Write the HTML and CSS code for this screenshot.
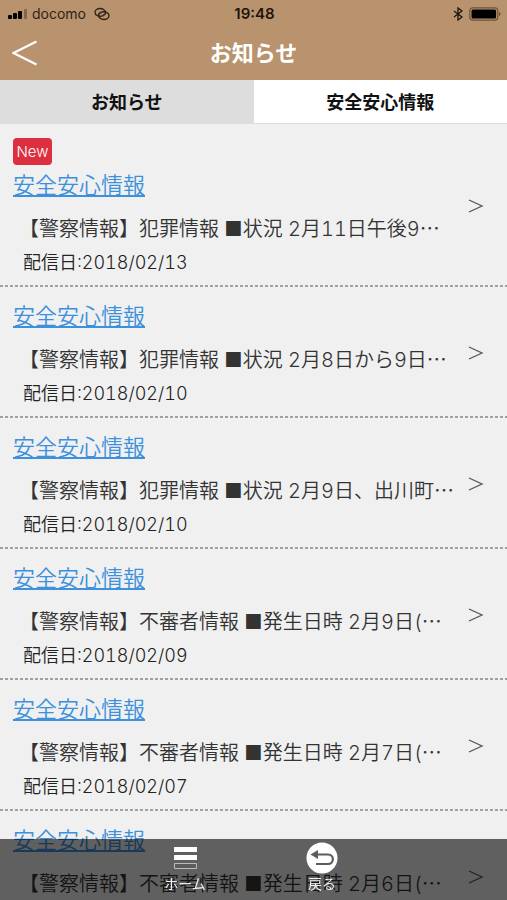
FILE: index.html
```
<!DOCTYPE html>
<html lang="ja">
<head>
  <meta charset="UTF-8">
  <meta name="viewport" content="width=device-width, initial-scale=1.0">
  <title>お知らせ</title>
  <link rel="stylesheet" href="styles.css">
</head>
<body>
  <header class="header">
    <div class="status">
      <div class="status-left">
        <svg width="20" height="12" viewBox="0 0 20 12">
          <rect x="0" y="7" width="4" height="4" rx="1"/>
          <rect x="5" y="5" width="4" height="6" rx="1"/>
          <rect x="10" y="3" width="4" height="8" rx="1"/>
          <rect x="16" y="1" width="3" height="10" rx="1" opacity=".3"/>
        </svg>
        <span>docomo</span>
        <svg class="tether" width="16" height="14" viewBox="0 0 16 14" fill="none" stroke="#2e2319" stroke-width="1.4" stroke-linecap="round">
          <path d="M9 8.800C5 10 1 8.500 1 5.500 1 3 3.500 1.500 6 1.500c3 0 5.500 2 5.500 4.200 0 1.300-1 2.300-2.500 2.500"/>
          <path d="M7 5.200c4-1.200 8 .3 8 3.300 0 2.500-2.500 4-5 4-3 0-5.500-2-5.500-4.200C4.500 7 5.500 6 7 5.800"/>
        </svg>
      </div>
      <div class="status-time">19:48</div>
      <div class="status-right">
        <svg width="10" height="14" viewBox="0 0 10 14" fill="none" stroke="#1c150e" stroke-width="1.3">
          <path d="M1 4l8 6-4 3V1l4 3-8 6"/>
        </svg>
        <svg width="32" height="14" viewBox="0 0 32 14">
          <rect x=".8" y=".8" width="28" height="12.4" rx="3" fill="none" stroke="#6b543e" stroke-width="1.2"/>
          <rect x="2.5" y="2.5" width="24.6" height="9" rx="1.5"/>
          <path d="M30 5c2 .6 2 3.4 0 4z" fill="#6b543e"/>
        </svg>
      </div>
    </div>
    <div class="title-bar">
      <button class="back-btn" aria-label="戻る">
        <svg width="26" height="26" viewBox="0 0 26 26" fill="none" stroke="#fff" stroke-width="2.2">
          <path d="M24.500 1.500L1.500 13l23 11.500"/>
        </svg>
      </button>
      <h1>お知らせ</h1>
    </div>
  </header>

  <nav class="tabs">
    <button class="tab">お知らせ</button>
    <button class="tab active">安全安心情報</button>
  </nav>

  <main class="list">
    <article class="item">
      <div class="item-body">
        <span class="badge">New</span>
        <a class="item-title" href="#">安全安心情報</a>
        <p class="summary">【警察情報】犯罪情報 ■状況 2月11日午後9<span class="dots">…</span></p>
        <p class="date">配信日:2018/02/13</p>
      </div>
      <svg class="arrow" viewBox="0 0 16 16"><path d="M1 2l13 6-13 6"/></svg>
    </article>
    <article class="item">
      <div class="item-body">
        <a class="item-title" href="#">安全安心情報</a>
        <p class="summary">【警察情報】犯罪情報 ■状況 2月8日から9日<span class="dots">…</span></p>
        <p class="date">配信日:2018/02/10</p>
      </div>
      <svg class="arrow" viewBox="0 0 16 16"><path d="M1 2l13 6-13 6"/></svg>
    </article>
    <article class="item">
      <div class="item-body">
        <a class="item-title" href="#">安全安心情報</a>
        <p class="summary">【警察情報】犯罪情報 ■状況 2月9日、出川町<span class="dots">…</span></p>
        <p class="date">配信日:2018/02/10</p>
      </div>
      <svg class="arrow" viewBox="0 0 16 16"><path d="M1 2l13 6-13 6"/></svg>
    </article>
    <article class="item">
      <div class="item-body">
        <a class="item-title" href="#">安全安心情報</a>
        <p class="summary">【警察情報】不審者情報 ■発生日時 2月9日(<span class="dots">…</span></p>
        <p class="date">配信日:2018/02/09</p>
      </div>
      <svg class="arrow" viewBox="0 0 16 16"><path d="M1 2l13 6-13 6"/></svg>
    </article>
    <article class="item">
      <div class="item-body">
        <a class="item-title" href="#">安全安心情報</a>
        <p class="summary">【警察情報】不審者情報 ■発生日時 2月7日(<span class="dots">…</span></p>
        <p class="date">配信日:2018/02/07</p>
      </div>
      <svg class="arrow" viewBox="0 0 16 16"><path d="M1 2l13 6-13 6"/></svg>
    </article>
    <article class="item">
      <div class="item-body">
        <a class="item-title" href="#">安全安心情報</a>
        <p class="summary">【警察情報】不審者情報 ■発生日時 2月6日(<span class="dots">…</span></p>
        <p class="date">配信日:2018/02/06</p>
      </div>
      <svg class="arrow" viewBox="0 0 16 16"><path d="M1 2l13 6-13 6"/></svg>
    </article>
  </main>

  <footer class="toolbar">
    <button class="tool">
      <svg width="32" height="32" viewBox="0 0 32 32">
        <path fill="#fff" d="M5 5h23v5H5zM5 13h23v5H5z"/>
        <path fill="#5c5c5c" stroke="#bbb" d="M5.500 21.500h22v5h-22z"/>
      </svg>
      <span>ホーム</span>
    </button>
    <button class="tool">
      <svg width="32" height="32" viewBox="0 0 32 32">
        <circle cx="16" cy="16" r="15.500" fill="#fff"/>
        <path fill="none" stroke="#5c5c5c" stroke-width="2.200" d="M10 12.500h12c6.500 0 6.500 9.500 0 9.500H10"/>
        <path fill="#5c5c5c" d="M4.500 12.500L12 8v9z"/>
      </svg>
      <span>戻る</span>
    </button>
  </footer>
</body>
</html>
```
FILE: styles.css
```
* {
  box-sizing: border-box;
}
body {
  margin: 0;
  height: 100vh;
  display: flex;
  flex-direction: column;
  font-family: Inter, "Noto Sans CJK JP", sans-serif;
  background-color: #f0f0f0;
  color: #333;
}
button {
  border: none;
  padding: 0;
  background: none;
  font-family: inherit;
  cursor: pointer;
}
.header {
  flex: none;
  height: 80px;
  background-color: #b9936e;
}
.status {
  display: grid;
  grid-template-columns: 1fr auto 1fr;
  align-items: center;
  height: 27px;
  padding: 0 6px 0 8px;
  font-size: 14px;
  color: #2e2319;
}
.status-left,
.status-right {
  display: flex;
  align-items: center;
  gap: 4px;
}
.tether {
  margin-left: 4px;
}
.status-time {
  font-weight: 600;
  font-size: 15px;
  color: #1c150e;
}
.status-right {
  justify-content: flex-end;
  gap: 6px;
}
.title-bar {
  display: grid;
  grid-template-columns: 48px 1fr 48px;
  align-items: center;
  height: 52px;
}
.back-btn {
  display: flex;
  padding-left: 12px;
}
h1 {
  margin: 0;
  font-size: 22px;
  line-height: 50px;
  text-align: center;
  color: white;
}
.tabs {
  flex: none;
  display: flex;
  height: 44px;
  border-bottom: 1px solid #ddd;
}
.tab {
  flex: 1;
  padding-bottom: 2px;
  background-color: #ddd;
  font-size: 18px;
  font-weight: bold;
  color: #111;
}
.tab.active {
  background-color: white;
}
.list {
  flex: 1;
  min-height: 0;
  overflow-y: auto;
  scrollbar-width: none;
}
.item {
  display: flex;
  align-items: center;
  padding: 13px 23px 9px 13px;
  background: repeating-linear-gradient(90deg, #a0a0a0 0 3px, #f0f0f0 3px 5px) left bottom / 100% 2px no-repeat;
}
.item-body {
  flex: 1;
  min-width: 0;
}
.badge {
  display: block;
  width: 39px;
  margin: 1px 0 4px;
  border-radius: 4px;
  background-color: #dc3040;
  color: white;
  font-size: 15px;
  font-weight: 300;
  line-height: 27px;
  text-align: center;
}
.item-title {
  display: block;
  width: fit-content;
  font-size: 22px;
  font-weight: 350;
  line-height: 33px;
  color: #3c90dc;
}
.summary {
  margin: 12px 0 0 6px;
  font-size: 20px;
  font-weight: 350;
  line-height: 30px;
  font-variant-numeric: tabular-nums;
  white-space: nowrap;
}
.date {
  margin: 4px 0 0 10px;
  font-size: 18px;
  font-weight: 350;
  line-height: 30px;
  font-variant-numeric: tabular-nums;
  color: #222;
}
.dots {
  font-family: "Noto Sans CJK JP", sans-serif;
  line-height: 1;
}
.arrow {
  flex: none;
  width: 16px;
  height: 16px;
  margin-bottom: 4px;
  fill: none;
  stroke: #555;
  stroke-width: 1.3;
}
.toolbar {
  position: fixed;
  left: 0;
  right: 0;
  bottom: 0;
  display: flex;
  justify-content: center;
  height: 61px;
  background-color: rgba(0, 0, 0, 0.6);
}
.tool {
  display: flex;
  flex-direction: column;
  align-items: center;
  width: 137px;
  padding-top: 3px;
  font-size: 14px;
  line-height: 20px;
  color: #eee;
}
```
